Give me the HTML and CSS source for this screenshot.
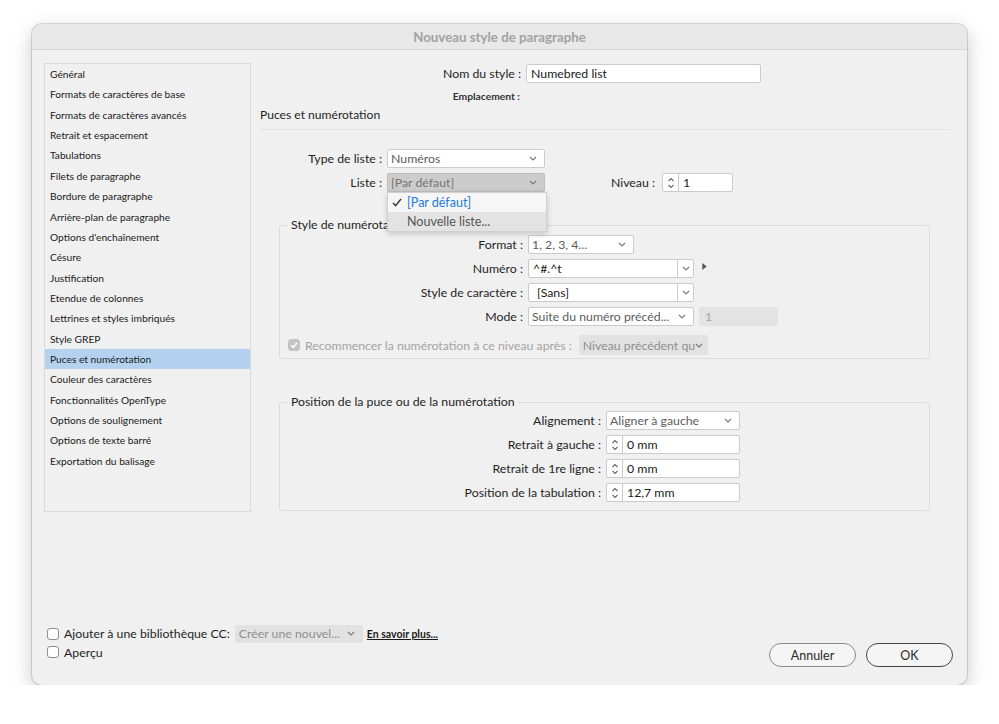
FILE: index.html
```html
<!DOCTYPE html>
<html lang="fr">
<head>
<meta charset="utf-8">
<title>Nouveau style de paragraphe</title>
<link rel="stylesheet" href="styles.css">
</head>
<body>
<div class="window">
  <div class="titlebar">Nouveau style de paragraphe</div>
  <div class="main">
    <ul class="sidebar">
      <li>Général</li>
      <li>Formats de caractères de base</li>
      <li>Formats de caractères avancés</li>
      <li>Retrait et espacement</li>
      <li>Tabulations</li>
      <li>Filets de paragraphe</li>
      <li>Bordure de paragraphe</li>
      <li>Arrière-plan de paragraphe</li>
      <li>Options d'enchaînement</li>
      <li>Césure</li>
      <li>Justification</li>
      <li>Etendue de colonnes</li>
      <li>Lettrines et styles imbriqués</li>
      <li>Style GREP</li>
      <li class="selected">Puces et numérotation</li>
      <li>Couleur des caractères</li>
      <li>Fonctionnalités OpenType</li>
      <li>Options de soulignement</li>
      <li>Options de texte barré</li>
      <li>Exportation du balisage</li>
    </ul>
    <div class="panel">
      <div class="row row-name">
        <span class="label">Nom du style :</span>
        <div class="input w235">Numebred list</div>
      </div>
      <div class="row row-loc">
        <span class="label small">Emplacement :</span>
      </div>
      <div class="section-title">Puces et numérotation</div>

      <div class="row row-type">
        <span class="label">Type de liste :</span>
        <div class="select w158"><span class="val">Numéros</span><svg class="chev" viewBox="0 0 8 5"><polyline points="1,1 4,4 7,1"/></svg></div>
      </div>
      <div class="row row-list">
        <span class="label">Liste :</span>
        <div class="select w158 pressed"><span class="val">[Par défaut]</span><svg class="chev" viewBox="0 0 8 5"><polyline points="1,1 4,4 7,1"/></svg>
          <div class="menu">
            <div class="menu-item checked"><svg class="check" viewBox="0 0 10 9"><polyline points="1,5 3.6,7.6 9,1"/></svg>[Par défaut]</div>
            <div class="menu-item hover">Nouvelle liste...</div>
          </div>
        </div>
        <span class="label niveau">Niveau :</span>
        <div class="spinner w71">
          <span class="arrows"><svg viewBox="0 0 8 14"><polyline points="1.5,5 4,2.5 6.5,5"/><polyline points="1.5,9 4,11.5 6.5,9"/></svg></span><span class="val">1</span>
        </div>
      </div>

      <div class="group g1">
        <div class="legend">Style de numérotation</div>
        <div class="row grow">
          <span class="label">Format :</span>
          <div class="select w106"><span class="val">1, 2, 3, 4...</span><svg class="chev" viewBox="0 0 8 5"><polyline points="1,1 4,4 7,1"/></svg></div>
        </div>
        <div class="row grow">
          <span class="label">Numéro :</span>
          <div class="combo w166"><span class="val">^#.^t</span><span class="cbtn"><svg class="chev" viewBox="0 0 8 5"><polyline points="1,1 4,4 7,1"/></svg></span></div>
          <svg class="tri" viewBox="0 0 5 8"><polygon points="0,0 5,4 0,8"/></svg>
        </div>
        <div class="row grow">
          <span class="label">Style de caractère :</span>
          <div class="combo w166"><span class="val pad">[Sans]</span><span class="cbtn"><svg class="chev" viewBox="0 0 8 5"><polyline points="1,1 4,4 7,1"/></svg></span></div>
        </div>
        <div class="row grow">
          <span class="label">Mode :</span>
          <div class="select w166"><span class="val">Suite du numéro précéd...</span><svg class="chev" viewBox="0 0 8 5"><polyline points="1,1 4,4 7,1"/></svg></div>
          <div class="disabled-input">1</div>
        </div>
        <div class="row restart">
          <span class="cbox checked-dis"><svg viewBox="0 0 10 10"><polyline points="2,5.2 4.2,7.4 8,2.8"/></svg></span>
          <span class="dis-text">Recommencer la numérotation à ce niveau après :</span>
          <div class="select dis w129 tight"><span class="val open">Niveau précédent qu</span><svg class="chev" viewBox="0 0 8 5"><polyline points="1,1 4,4 7,1"/></svg></div>
        </div>
      </div>

      <div class="group g2">
        <div class="legend">Position de la puce ou de la numérotation</div>
        <div class="row prow">
          <span class="label">Alignement :</span>
          <div class="select w134"><span class="val">Aligner à gauche</span><svg class="chev" viewBox="0 0 8 5"><polyline points="1,1 4,4 7,1"/></svg></div>
        </div>
        <div class="row prow">
          <span class="label">Retrait à gauche :</span>
          <div class="spinner w134"><span class="arrows"><svg viewBox="0 0 8 14"><polyline points="1.5,5 4,2.5 6.5,5"/><polyline points="1.5,9 4,11.5 6.5,9"/></svg></span><span class="val">0 mm</span></div>
        </div>
        <div class="row prow">
          <span class="label">Retrait de 1re ligne :</span>
          <div class="spinner w134"><span class="arrows"><svg viewBox="0 0 8 14"><polyline points="1.5,5 4,2.5 6.5,5"/><polyline points="1.5,9 4,11.5 6.5,9"/></svg></span><span class="val">0 mm</span></div>
        </div>
        <div class="row prow">
          <span class="label">Position de la tabulation :</span>
          <div class="spinner w134"><span class="arrows"><svg viewBox="0 0 8 14"><polyline points="1.5,5 4,2.5 6.5,5"/><polyline points="1.5,9 4,11.5 6.5,9"/></svg></span><span class="val">12,7 mm</span></div>
        </div>
      </div>
    </div>
  </div>
  <div class="footer">
    <div class="footer-left">
      <div class="frow">
        <span class="cbox"></span>
        <span class="ftext">Ajouter à une bibliothèque CC:</span>
        <div class="select dis w128"><span class="val">Créer une nouvel...</span><svg class="chev" viewBox="0 0 8 5"><polyline points="1,1 4,4 7,1"/></svg></div>
        <a class="link">En savoir plus...</a>
      </div>
      <div class="frow frow2">
        <span class="cbox"></span>
        <span class="ftext">Aperçu</span>
      </div>
    </div>
    <div class="buttons">
      <div class="btn">Annuler</div>
      <div class="btn ok">OK</div>
    </div>
  </div>
</div>
</body>
</html>
```

FILE: styles.css
```css
* { box-sizing: border-box; }
body {
  margin: 0;
  background: #ffffff;
  font-family: Lato, "Open Sans", "Liberation Sans", sans-serif;
  font-size: 12.3px;
  color: #1f1f1f;
}
.window {
  margin: 24px 0 0 32px;
  width: 935px;
  height: 661px;
  background: #f0f0f0;
  border-radius: 10px;
  box-shadow: 0 0 0 1px rgba(0,0,0,0.13), 0 6px 20px rgba(0,0,0,0.22);
  overflow: hidden;
  display: flex;
  flex-direction: column;
}
.titlebar {
  height: 26px;
  flex: none;
  background: #e8e8e8;
  border-bottom: 1px solid #d6d6d6;
  display: flex;
  align-items: center;
  justify-content: center;
  font-weight: 700;
  font-size: 13.3px;
  color: #a2a2a2;
}
.main {
  display: flex;
  padding: 13px 0 0 12px;
}
.sidebar {
  list-style: none;
  margin: 0;
  padding: 0;
  width: 207px;
  height: 449px;
  border: 1px solid #d9d9d9;
  background: #f0f0f0;
  flex: none;
}
.sidebar li {
  height: 20.37px;
  line-height: 20.37px;
  padding-left: 5px;
  font-size: 10.2px;
  color: #1a1a1a;
  white-space: nowrap;
}
.sidebar li.selected { background: #b4d2f0; }

.panel {
  flex: 1;
  padding: 1px 17px 0 9px;
  position: relative;
}
.row {
  display: flex;
  align-items: center;
}
.label {
  text-align: right;
  white-space: nowrap;
  flex: none;
  margin-right: 5px;
}
.row-name { height: 19px; }
.row-name .label { width: 261px; }
.row-loc { height: 14px; margin-top: 6px; }
.row-loc .label { width: 260px; }
.label.small { font-size: 10.3px; font-weight: 700; color: #333; }
.section-title {
  margin-top: 5px;
  height: 22px;
  line-height: 14px;
  border-bottom: 1px solid #e2e2e2;
  font-size: 12.1px;
}
.row-type { margin-top: 19px; height: 19px; }
.row-list { margin-top: 5px; height: 19px; }
.row-type .label, .row-list > .label:first-child { width: 122px; }
.label.niveau { width: 110px; margin-right: 7px; }

.input, .select, .combo, .spinner {
  height: 19px;
  border: 1px solid #cbcbcb;
  border-radius: 2px;
  background: #ffffff;
  display: flex;
  align-items: center;
  flex: none;
  white-space: nowrap;
}
.input { padding-left: 4px; color: #1a1a1a; }
.select { position: relative; padding: 0 7px 0 3px; color: #5c5c5c; }
.select .val { flex: 1; overflow: hidden; }
.select .val.open { overflow: visible; }
.select.tight { padding-right: 5px; }
.chev {
  width: 8px;
  height: 5px;
  flex: none;
  fill: none;
  stroke: #777;
  stroke-width: 1.1;
}
.select.pressed { background: #cccccc; border-color: #bdbdbd; color: #747474; }
.select.dis { background: #e2e2e2; border-color: #e2e2e2; color: #8f8f8f; }

.w235 { width: 235px; }
.w158 { width: 158px; }
.w106 { width: 106px; }
.w166 { width: 166px; }
.w129 { width: 129px; }
.w134 { width: 134px; }
.w128 { width: 128px; }
.w71 { width: 71px; }

.menu {
  position: absolute;
  top: 18px;
  left: -1px;
  width: 160px;
  background: #f6f6f6;
  border: 1px solid #d0d0d0;
  box-shadow: 0 2px 6px rgba(0,0,0,0.18);
  z-index: 5;
}
.menu-item {
  height: 19px;
  display: flex;
  align-items: center;
  padding-left: 19px;
  color: #555;
  font-size: 12.5px;
  position: relative;
}
.menu-item.checked { color: #1b7ae0; }
.menu-item.hover { background: #e3e3e3; height: 19px; }
.check {
  position: absolute;
  left: 4px;
  top: 5px;
  width: 10px;
  height: 9px;
  fill: none;
  stroke: #333;
  stroke-width: 1.4;
}

.spinner { color: #1a1a1a; }
.spinner .arrows {
  width: 16px;
  height: 100%;
  border-right: 1px solid #cbcbcb;
  display: flex;
  align-items: center;
  justify-content: center;
}
.spinner .arrows svg {
  width: 8px;
  height: 14px;
  fill: none;
  stroke: #666;
  stroke-width: 1.1;
}
.spinner .val { padding-left: 4px; }

.combo { color: #1a1a1a; padding-left: 4px; }
.combo .val { flex: 1; }
.combo .val.pad { padding-left: 4px; }
.combo .cbtn {
  width: 16px;
  height: 100%;
  border-left: 1px solid #cbcbcb;
  display: flex;
  align-items: center;
  justify-content: center;
}
.tri { width: 5px; height: 7px; fill: #555; margin-left: 8px; margin-top: -5px; }

.group {
  border: 1px solid #dadada;
  border-radius: 3px;
  margin-left: 19px;
  width: 651px;
}
.legend {
  margin: -8px 0 0 8px;
  padding: 0 3px;
  height: 14px;
  line-height: 14px;
  width: fit-content;
  background: #f0f0f0;
}
.g1 { margin-top: 33px; padding-bottom: 3px; }
.g1 .grow { height: 19px; margin-top: 5px; }
.g1 .grow:nth-child(2) { margin-top: 3px; }
.g1 .grow .label { width: 243px; }
.disabled-input {
  width: 79px;
  height: 19px;
  margin-left: 5px;
  background: #e3e3e3;
  border-radius: 2px;
  color: #a5a5a5;
  padding-left: 6px;
  line-height: 19px;
}
.restart { margin-top: 9px; height: 20px; padding-left: 8px; }
.restart .select { height: 20px; }
.cbox {
  width: 12px;
  height: 12px;
  border: 1px solid #8f8f8f;
  border-radius: 3px;
  background: #ffffff;
  flex: none;
  display: flex;
}
.cbox svg { width: 10px; height: 10px; fill: none; stroke: #fff; stroke-width: 1.6; }
.cbox.checked-dis { background: #c4c4c4; border-color: #c4c4c4; }
.dis-text { color: #a3a3a3; margin: 0 7px 0 5px; white-space: nowrap; }

.g2 { margin-top: 43px; padding-bottom: 8px; }
.g2 .prow { height: 19px; margin-top: 5px; }
.g2 .prow:nth-child(2) { margin-top: 2px; }
.g2 .prow .label { width: 321px; }

.footer {
  margin-top: auto;
  padding: 0 14px 18px 15px;
  display: flex;
  align-items: flex-end;
  justify-content: space-between;
}
.footer-left { padding-bottom: 6px; }
.frow { display: flex; align-items: center; height: 19px; }
.frow2 { margin-top: 0; height: 18px; }
.ftext { margin: 0 5px 0 5px; white-space: nowrap; }
.frow .select { height: 18px; }
.link {
  margin-left: 4px;
  font-size: 10.5px;
  font-weight: 700;
  color: #1a1a1a;
  text-decoration: underline;
  white-space: nowrap;
}
.buttons { display: flex; gap: 10px; }
.btn {
  width: 87px;
  height: 24px;
  border: 1px solid #8a8a8a;
  border-radius: 12px;
  background: #f5f5f5;
  display: flex;
  align-items: center;
  justify-content: center;
  font-size: 12.5px;
  color: #2a2a2a;
}
.btn.ok { border: 1.5px solid #444; }
```
